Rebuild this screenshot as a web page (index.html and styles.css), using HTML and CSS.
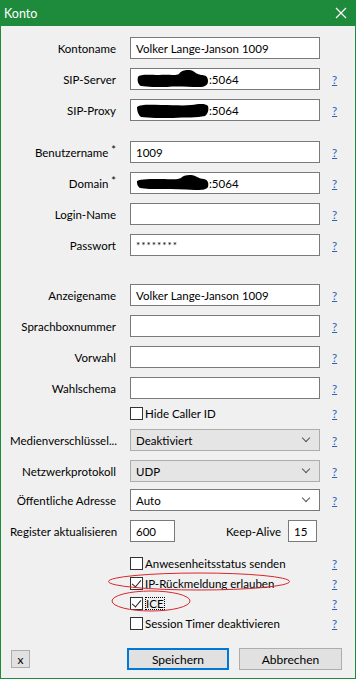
FILE: index.html
```html
<!DOCTYPE html>
<html lang="de">

<head>
    <meta charset="UTF-8">
    <meta name="viewport" content="width=device-width, initial-scale=1.0">
    <title>Konto</title>
    <link rel="stylesheet" href="styles.css">
</head>

<body>
    <div class="window">
        <!-- Titelleiste -->
        <div class="titlebar">
            <span class="title">Konto</span>
            <svg class="close" width="12" height="12" viewBox="0 0 12 12">
                <path d="M1 1 L11 11 M11 1 L1 11" stroke="#fff" stroke-width="1.2" fill="none" />
            </svg>
        </div>

        <div class="dialog">
            <!-- Server -->
            <div class="row first">
                <label>Kontoname</label>
                <div class="field">Volker Lange-Janson 1009</div>
                <span></span>
            </div>
            <div class="row">
                <label>SIP-Server</label>
                <div class="field">
                    <svg class="blot" width="72" height="20" viewBox="0 0 72 20">
                        <path d="M1 8 C3 5 12 6 22 6 C32 5 38 7 42 5 C44 1 52 0 56 2 C59 4 60 5 64 6 C69 6 71 8 71 12 C71 16 68 18 62 18 C50 18 40 17 30 18 C20 18 10 18 4 17 C1 16 0 11 1 8 Z" fill="#000" />
                    </svg>:5064
                </div>
                <a class="help">?</a>
            </div>
            <div class="row">
                <label>SIP-Proxy</label>
                <div class="field">
                    <svg class="blot" width="72" height="20" viewBox="0 0 72 20">
                        <path d="M0 7 C4 4 14 5 24 5 C36 5 46 6 54 5 C62 4 68 3 71 6 C72 9 71 14 68 16 C60 18 48 17 36 18 C24 18 12 18 4 17 C1 15 0 10 0 7 Z" fill="#000" />
                    </svg>:5064
                </div>
                <a class="help">?</a>
            </div>

            <!-- Anmeldung -->
            <div class="row section">
                <label>Benutzername<span class="req">*</span></label>
                <div class="field">1009</div>
                <a class="help">?</a>
            </div>
            <div class="row">
                <label>Domain<span class="req">*</span></label>
                <div class="field">
                    <svg class="blot" width="72" height="20" viewBox="0 0 72 20">
                        <path d="M0 8 C4 6 14 6 24 6 C34 6 40 7 44 5 C46 2 54 1 58 3 C62 5 64 6 67 6 C71 7 72 10 71 14 C69 17 64 17 58 17 C46 16 36 16 26 16 C16 16 8 16 3 15 C0 13 0 10 0 8 Z" fill="#000" />
                    </svg>:5064
                </div>
                <a class="help">?</a>
            </div>
            <div class="row">
                <label>Login-Name</label>
                <div class="field"></div>
                <a class="help">?</a>
            </div>
            <div class="row">
                <label>Passwort</label>
                <div class="field stars">********</div>
                <a class="help">?</a>
            </div>

            <!-- Anzeige -->
            <div class="row section-lg">
                <label>Anzeigename</label>
                <div class="field">Volker Lange-Janson 1009</div>
                <a class="help">?</a>
            </div>
            <div class="row">
                <label>Sprachboxnummer</label>
                <div class="field"></div>
                <a class="help">?</a>
            </div>
            <div class="row">
                <label>Vorwahl</label>
                <div class="field"></div>
                <a class="help">?</a>
            </div>
            <div class="row">
                <label>Wahlschema</label>
                <div class="field"></div>
                <a class="help">?</a>
            </div>
            <div class="row check-row after-field">
                <span></span>
                <div class="check"><span class="box"></span>Hide Caller ID</div>
                <a class="help">?</a>
            </div>

            <!-- Netzwerk -->
            <div class="row after-check">
                <label>Medienverschlüssel...</label>
                <div class="select grey">Deaktiviert<span class="chevron"></span></div>
                <a class="help">?</a>
            </div>
            <div class="row">
                <label>Netzwerkprotokoll</label>
                <div class="select grey">UDP<span class="chevron"></span></div>
                <a class="help">?</a>
            </div>
            <div class="row tight">
                <label>Öffentliche Adresse</label>
                <div class="select">Auto<span class="chevron"></span></div>
                <a class="help">?</a>
            </div>
            <div class="row">
                <label>Register aktualisieren</label>
                <div class="pair">
                    <div class="field small">600</div>
                    <span class="pair-label">Keep-Alive</span>
                    <div class="field tiny">15</div>
                </div>
                <span></span>
            </div>

            <div class="row check-row checks-start">
                <span></span>
                <div class="check"><span class="box"></span>Anwesenheitsstatus senden</div>
                <a class="help">?</a>
            </div>
            <div class="row check-row">
                <span></span>
                <div class="check"><span class="box checked"></span>IP-Rückmeldung erlauben</div>
                <a class="help">?</a>
            </div>
            <div class="row check-row">
                <span></span>
                <div class="check"><span class="box checked"></span><span class="focus">ICE</span></div>
                <a class="help">?</a>
            </div>
            <div class="row check-row">
                <span></span>
                <div class="check"><span class="box"></span>Session Timer deaktivieren</div>
                <a class="help">?</a>
            </div>

            <!-- Schaltflächen -->
            <div class="footer">
                <button class="btn-x">x</button>
                <button class="btn default">Speichern</button>
                <button class="btn">Abbrechen</button>
            </div>

            <!-- rote Markierungen -->
            <svg class="marks" width="354" height="652" viewBox="0 0 354 652">
                <ellipse cx="198" cy="555.5" rx="90.5" ry="8.5" fill="none" stroke="#d9262b" stroke-width="1" />
                <ellipse cx="150" cy="575" rx="39" ry="10" fill="none" stroke="#d9262b" stroke-width="1" />
            </svg>
        </div>
    </div>
</body>

</html>
```

FILE: styles.css
```css
body {
    margin: 0;
    padding: 0;
    font-family: Lato, "Noto Sans", sans-serif;
    font-size: 11.5px;
    color: #000;
    background-color: #f0f0f0;
}

.window {
    width: 354px;
    height: 678px;
    border: 1px solid #1e8a3c;
    border-top: none;
    background-color: #f0f0f0;
}

.titlebar {
    height: 26px;
    background-color: #1e8a3c;
    color: white;
    display: flex;
    align-items: center;
    justify-content: space-between;
    padding: 0 9px 0 4px;
    margin: 0 -1px;
}

.title {
    font-size: 12.5px;
}

.dialog {
    position: relative;
    padding: 11px 0 0 9px;
}

/* Formularzeilen */
.row {
    display: grid;
    grid-template-columns: 106px 190px auto;
    column-gap: 14px;
    align-items: center;
    height: 22px;
    margin-top: 9px;
}

.row.first {
    margin-top: 0;
}

.row.section {
    margin-top: 20px;
}

.row.section-lg {
    margin-top: 28px;
}

.row.after-field {
    margin-top: 4px;
}

.row.after-check {
    margin-top: 6px;
}

.row.tight {
    margin-top: 7px;
}

.row.checks-start {
    margin-top: 11px;
}

.row.check-row {
    height: 20px;
}

.row.check-row + .row.check-row {
    margin-top: 0;
}

.row label {
    text-align: right;
    white-space: nowrap;
}

.req {
    display: inline-block;
    font-size: 11px;
    margin-left: 3px;
    transform: translateY(-3px);
}

.field {
    box-sizing: border-box;
    height: 22px;
    background-color: white;
    border: 1px solid #7a7a7a;
    padding: 0 5px;
    display: flex;
    align-items: center;
    white-space: nowrap;
}

.field.stars {
    font-size: 10px;
    letter-spacing: 1px;
    align-items: flex-start;
    padding-top: 4px;
}

.field.small {
    width: 45px;
}

.field.tiny {
    width: 29px;
}

.blot {
    margin-left: 1px;
}

.help {
    color: #2b63b8;
    text-decoration: underline;
    margin-left: -2px;
    cursor: pointer;
}

/* Auswahllisten */
.select {
    box-sizing: border-box;
    height: 22px;
    background-color: white;
    border: 1px solid #7a7a7a;
    padding: 0 5px;
    display: flex;
    align-items: center;
    justify-content: space-between;
}

.select.grey {
    background-color: #e5e5e5;
    border-color: #adadad;
}

.chevron {
    width: 5px;
    height: 5px;
    border-right: 1px solid #555;
    border-bottom: 1px solid #555;
    transform: rotate(45deg);
    margin: 0 5px 4px 0;
}

.pair {
    display: flex;
    align-items: center;
}

.pair-label {
    margin-left: auto;
    margin-right: 7px;
}

.pair .field.tiny {
    margin-right: 3px;
}

/* Kontrollkästchen */
.check {
    display: flex;
    align-items: center;
    white-space: nowrap;
}

.box {
    box-sizing: border-box;
    width: 13px;
    height: 13px;
    border: 1px solid #333;
    background-color: white;
    margin-right: 2px;
    position: relative;
}

.box.checked::after {
    content: "";
    position: absolute;
    left: 3px;
    top: 0px;
    width: 4px;
    height: 8px;
    border-right: 1px solid #222;
    border-bottom: 1px solid #222;
    transform: rotate(40deg);
}

.focus {
    outline: 1px dotted #000;
    outline-offset: -1px;
    padding: 0 1px;
}

/* Schaltflächen */
.footer {
    display: flex;
    align-items: center;
    margin-top: 15px;
}

.btn-x {
    box-sizing: border-box;
    width: 19px;
    height: 18px;
    margin-left: 1px;
    padding: 0;
    background-color: #e1e1e1;
    border: 1px solid #adadad;
    font-family: inherit;
    font-size: 12px;
}

.btn {
    box-sizing: border-box;
    width: 103px;
    height: 22px;
    margin-left: 10px;
    padding: 0;
    background-color: #e1e1e1;
    border: 1px solid #adadad;
    font-family: inherit;
    font-size: 12px;
}

.btn.default {
    width: 102px;
    margin-left: 97px;
    border: 2px solid #0078d7;
}

.marks {
    position: absolute;
    left: 0;
    top: 0;
    pointer-events: none;
}
```
